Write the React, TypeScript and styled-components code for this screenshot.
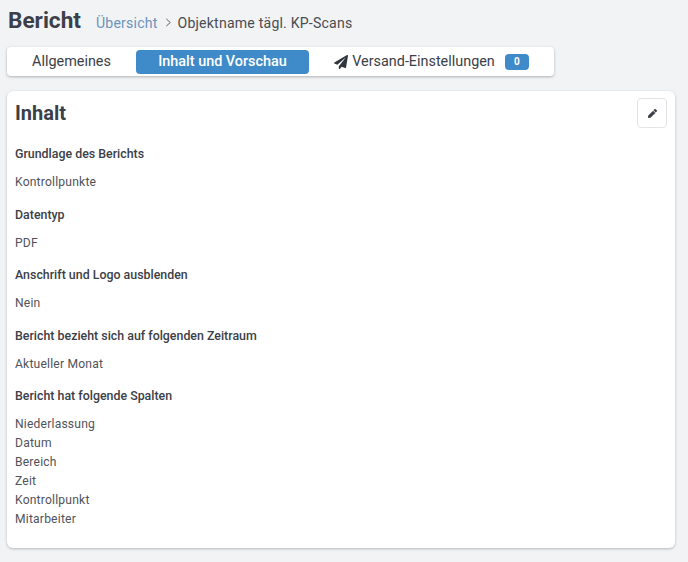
import React from "react";
import styled, { createGlobalStyle } from "styled-components";
import { FaPaperPlane, FaPen } from "react-icons/fa";

const GlobalStyle = createGlobalStyle`
  html, body {
    margin: 0;
    padding: 0;
    background: #f2f3f5;
    font-family: Roboto, "Liberation Sans", sans-serif;
    color: #3c4048;
    overflow: hidden;
  }
`;

const sections = [
  { label: "Grundlage des Berichts", values: ["Kontrollpunkte"] },
  { label: "Datentyp", values: ["PDF"] },
  { label: "Anschrift und Logo ausblenden", values: ["Nein"] },
  { label: "Bericht bezieht sich auf folgenden Zeitraum", values: ["Aktueller Monat"] },
  {
    label: "Bericht hat folgende Spalten",
    values: ["Niederlassung", "Datum", "Bereich", "Zeit", "Kontrollpunkt", "Mitarbeiter"],
  },
];

export default function App() {
  return (
    <Page>
      <GlobalStyle />
      <Header>
        <Title>Bericht</Title>
        <Crumbs>
          <CrumbLink>Übersicht</CrumbLink>
          <Chevron viewBox="0 0 10 10">
            <path d="M2.5 1 L7 5 L2.5 9" fill="none" stroke="#555" strokeWidth="1" />
          </Chevron>
          <span>Objektname tägl. KP-Scans</span>
        </Crumbs>
      </Header>

      <Tabs>
        <Tab $width={129}>Allgemeines</Tab>
        <Tab $width={173} $active>Inhalt und Vorschau</Tab>
        <Tab $width={245}>
          <FaPaperPlane size={14} color="#30343c" />
          <span>Versand-Einstellungen</span>
          <Badge>0</Badge>
        </Tab>
      </Tabs>

      <Card>
        <CardHead>
          <CardTitle>Inhalt</CardTitle>
          <EditButton>
            <FaPen size={9} color="#3c4048" />
          </EditButton>
        </CardHead>
        {sections.map((s) => (
          <Section key={s.label}>
            <Label>{s.label}</Label>
            <Values>
              {s.values.map((v) => (
                <Value key={v}>{v}</Value>
              ))}
            </Values>
          </Section>
        ))}
      </Card>
    </Page>
  );
}

const Page = styled.div`
  width: 688px;
  height: 562px;
  box-sizing: border-box;
  padding: 7px 13px 0 7px;
  overflow: hidden;
`;

const Header = styled.div`
  display: flex;
  align-items: center;
  height: 28px;
  margin-bottom: 12px;
`;

const Title = styled.h1`
  margin: 0 15px 0 1px;
  font-size: 22.6px;
  font-weight: 700;
  line-height: 28px;
  color: #3a3f4a;
`;

const Crumbs = styled.div`
  display: flex;
  align-items: center;
  font-size: 14.1px;
  padding-top: 3px;
  letter-spacing: 0.2px;
  color: #4a4d52;
`;

const CrumbLink = styled.span`
  color: #6a95bd;
`;

const Chevron = styled.svg`
  width: 9px;
  height: 9px;
  margin: 0 5px 0 6px;
`;

const Tabs = styled.div`
  display: flex;
  align-items: center;
  width: 547px;
  height: 29px;
  box-sizing: border-box;
  background: #fff;
  border-radius: 4px;
  box-shadow: 0 1px 3px rgba(0, 0, 0, 0.28);
`;

const Tab = styled.div<{ $width: number; $active?: boolean }>`
  display: flex;
  align-items: center;
  justify-content: center;
  gap: 4px;
  width: ${(p) => p.$width}px;
  height: 24px;
  border-radius: 4px;
  font-size: 14.4px;
  font-weight: ${(p) => (p.$active ? 500 : 400)};
  background: ${(p) => (p.$active ? "#3f8bc9" : "transparent")};
  color: ${(p) => (p.$active ? "#fff" : "#3c4048")};
`;

const Badge = styled.span`
  margin-left: 6px;
  width: 24px;
  height: 16px;
  border-radius: 4px;
  background: #3f8bc9;
  color: #fff;
  font-size: 10px;
  font-weight: 700;
  line-height: 16px;
  text-align: center;
`;

const Card = styled.div`
  margin-top: 15px;
  width: 668px;
  height: 457px;
  box-sizing: border-box;
  padding: 7px 8px 0;
  background: #fff;
  border-radius: 6px;
  box-shadow: 0 1px 3px rgba(0, 0, 0, 0.25);
`;

const CardHead = styled.div`
  display: flex;
  justify-content: space-between;
  align-items: flex-start;
  height: 47px;
`;

const CardTitle = styled.h2`
  margin: 0;
  padding-top: 3px;
  font-size: 20px;
  font-weight: 700;
  line-height: 24px;
  color: #3a3f4a;
`;

const EditButton = styled.div`
  display: flex;
  align-items: center;
  justify-content: center;
  width: 30px;
  height: 30px;
  box-sizing: border-box;
  background: #fff;
  border: 1px solid #e2e3e6;
  border-radius: 4px;
`;

const Section = styled.div`
  margin-bottom: 13.5px;
`;

const Label = styled.div`
  font-size: 12.4px;
  font-weight: 500;
  line-height: 17px;
  margin-bottom: 11px;
  color: #3c4048;
`;

const Values = styled.div`
  display: flex;
  flex-direction: column;
`;

const Value = styled.div`
  font-size: 12.1px;
  line-height: 19px;
  letter-spacing: 0.2px;
  color: #50535a;
`;
